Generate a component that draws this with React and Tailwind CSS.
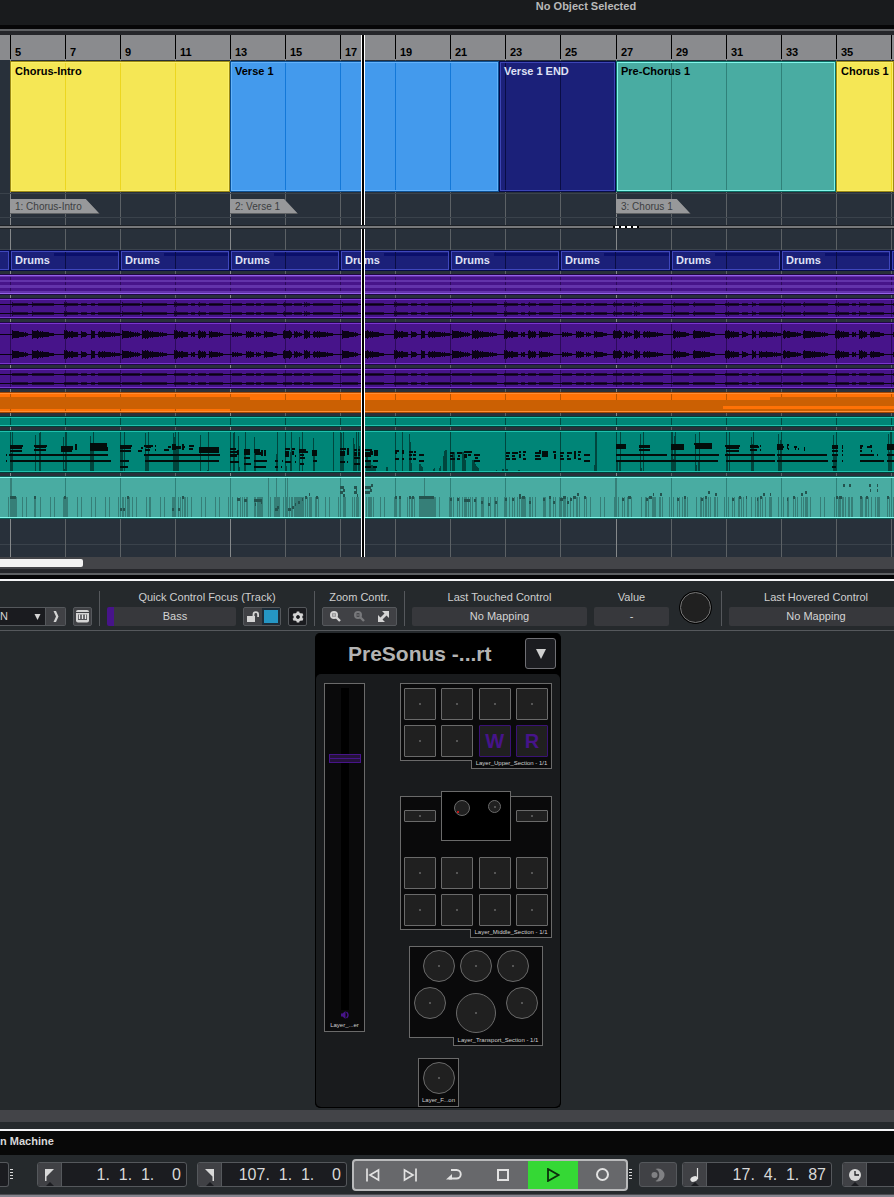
import React, { useState } from "react";

// bar numbers shown in the ruler, one cell for every two bars
const bars = [5, 7, 9, 11, 13, 15, 17, 19, 21, 23, 25, 27, 29, 31, 33, 35, 37];

const sections = [
  { name: "Chorus-Intro", width: "w-[220px]", offset: 0, box: "bg-[#f5e755] border-[#9c8a12] text-black", inner: "border-[#fbef6a]", line: "border-[#ecd61f]" },
  { name: "Verse 1", width: "w-[269px]", offset: 0, box: "bg-[#439aed] border-[#0b4f93] text-black", inner: "border-[#63b2fb]", line: "border-[#1378d8]" },
  { name: "Verse 1 END", width: "w-[117px]", offset: 6, box: "bg-[#1b2079] border-[#060b4a] text-[#dfe1f5]", inner: "border-[#3d45b5]", line: "border-[#0a0d45]" },
  { name: "Pre-Chorus 1", width: "w-[220px]", offset: 0, box: "bg-[#49aca2] border-[#0b6f65] text-black", inner: "border-[#83f6ea]", line: "border-[#2f8179]" },
  { name: "Chorus 1", width: "flex-1", offset: 0, box: "bg-[#f5e755] border-[#9c8a12] text-black", inner: "border-[#fbef6a]", line: "border-[#ecd61f]" },
];

// [x, y, w, h]
const bassNotes = [
  [10, 15, 13, 2], [10, 17, 12, 2], [10, 20, 12, 2], [34, 15, 13, 2], [35, 17, 11, 1], [34, 19, 12, 2],
  [61, 16, 12, 4], [61, 20, 11, 2], [75, 14, 2, 6], [90, 13, 17, 4], [90, 17, 18, 4],
  [6, 24, 1, 2], [9, 24, 99, 2], [6, 30, 1, 2], [10, 30, 101, 2],
  [120, 15, 12, 2], [120, 17, 11, 2], [120, 20, 11, 2], [138, 20, 4, 2], [141, 17, 2, 2], [120, 30, 9, 2], [120, 36, 8, 2],
  [144, 15, 9, 2], [146, 17, 5, 1], [145, 19, 5, 2], [155, 15, 1, 2], [155, 19, 1, 2], [144, 24, 76, 2], [145, 30, 74, 2],
  [164, 19, 5, 2], [168, 16, 3, 2], [172, 14, 4, 6], [176, 16, 5, 3], [182, 14, 2, 6], [184, 16, 1, 2], [189, 15, 5, 2], [189, 18, 4, 2],
  [199, 17, 20, 6], [230, 18, 6, 2], [230, 21, 7, 2], [230, 24, 7, 3], [230, 31, 9, 2], [237, 20, 2, 5],
  [244, 19, 6, 2], [244, 21, 6, 4], [244, 27, 6, 2], [244, 33, 7, 2], [254, 19, 6, 4], [255, 22, 6, 3],
  [261, 20, 2, 6], [264, 20, 2, 6], [254, 30, 13, 2], [254, 36, 12, 2], [275, 30, 3, 2], [282, 30, 1, 2], [275, 36, 3, 2], [281, 36, 1, 2],
  [285, 18, 5, 2], [285, 21, 4, 6], [292, 18, 3, 2], [292, 21, 2, 4], [285, 31, 6, 2], [295, 31, 1, 2], [295, 25, 1, 2],
  [299, 19, 7, 4], [305, 21, 3, 2], [300, 24, 4, 2], [300, 27, 5, 2], [300, 33, 4, 2], [312, 20, 5, 6], [313, 30, 4, 2],
  [340, 18, 6, 2], [340, 21, 5, 5], [347, 18, 2, 2], [347, 20, 2, 5], [340, 31, 5, 2], [347, 31, 1, 2],
  [354, 19, 3, 2], [358, 19, 2, 2], [354, 22, 3, 4], [358, 22, 2, 4], [354, 27, 6, 2], [354, 33, 6, 2],
  [365, 19, 7, 2], [365, 22, 6, 5], [370, 21, 3, 4], [374, 20, 4, 6], [365, 30, 6, 2], [373, 30, 5, 2], [365, 36, 6, 2], [373, 36, 4, 2],
  [395, 20, 4, 2], [395, 22, 2, 2], [402, 20, 2, 4], [395, 28, 4, 2], [402, 28, 2, 2],
  [409, 21, 4, 2], [414, 21, 2, 2], [409, 24, 3, 2], [413, 24, 3, 2], [409, 28, 3, 2], [413, 28, 3, 2], [419, 24, 5, 2], [419, 30, 5, 2],
  [450, 22, 4, 2], [450, 25, 3, 2], [450, 28, 5, 2], [457, 22, 5, 2], [458, 25, 2, 2], [457, 28, 3, 2],
  [464, 21, 4, 2], [468, 21, 4, 2], [464, 24, 3, 4], [468, 24, 3, 2], [474, 24, 6, 2], [475, 27, 3, 2], [474, 30, 6, 2],
  [506, 22, 4, 2], [506, 25, 3, 2], [506, 28, 4, 2], [512, 22, 6, 2], [512, 25, 3, 2], [512, 28, 4, 2],
  [519, 21, 2, 2], [519, 24, 2, 4], [523, 21, 3, 2], [523, 24, 2, 2], [523, 28, 3, 2],
  [535, 22, 6, 2], [539, 20, 2, 2], [535, 25, 5, 2], [535, 28, 6, 2], [542, 21, 6, 6], [553, 21, 3, 2], [554, 24, 2, 5],
  [560, 22, 4, 2], [560, 25, 3, 2], [560, 28, 4, 2], [567, 22, 5, 2], [567, 25, 2, 2], [567, 28, 4, 2],
  [574, 21, 2, 8], [578, 21, 3, 2], [578, 24, 2, 2], [578, 28, 3, 2], [584, 24, 6, 2], [584, 30, 6, 2],
  [616, 14, 10, 5], [639, 15, 11, 3], [639, 19, 11, 2], [616, 24, 51, 2], [616, 30, 102, 2], [671, 14, 13, 6],
  [694, 13, 18, 2], [695, 15, 17, 4], [671, 24, 48, 2], [725, 15, 15, 2], [726, 17, 13, 2], [726, 20, 13, 2], [725, 24, 50, 2], [726, 30, 49, 2],
  [750, 15, 8, 3], [757, 16, 2, 2], [750, 19, 7, 2], [760, 15, 1, 2], [760, 19, 1, 2], [777, 14, 6, 6], [783, 16, 1, 2],
  [787, 14, 2, 2], [787, 16, 1, 3], [788, 18, 1, 2], [794, 16, 3, 2], [795, 18, 1, 2], [798, 18, 1, 2], [804, 17, 1, 4],
  [777, 24, 50, 2], [777, 30, 51, 2], [832, 15, 6, 4], [832, 20, 6, 2], [842, 15, 1, 4], [842, 20, 1, 2], [832, 24, 6, 2], [842, 24, 1, 2],
  [832, 30, 5, 2], [842, 30, 1, 2], [832, 36, 4, 2], [860, 15, 3, 2], [860, 17, 2, 2], [860, 20, 2, 2], [867, 16, 5, 2], [870, 15, 2, 2],
  [871, 20, 1, 2], [860, 24, 14, 2], [877, 24, 1, 2], [860, 30, 24, 2], [887, 14, 7, 6], [887, 24, 7, 2], [887, 30, 7, 2],
];

// [x, top, w], always drawn down to the bottom of the clip
const bassStems = [
  [10, 2, 1], [12, 2, 1], [10, 23, 3], [35, 5, 1], [39, 3, 2], [40, 2, 1], [63, 7, 1], [65, 2, 2], [64, 39, 1], [90, 6, 1], [90, 18, 3], [93, 2, 1], [93, 34, 1],
  [120, 2, 1], [120, 19, 3], [124, 2, 1], [145, 3, 1], [148, 2, 1], [145, 24, 4], [173, 3, 1], [174, 7, 1], [173, 16, 6], [178, 2, 1], [200, 5, 1], [208, 2, 1],
  [207, 40, 2], [230, 2, 1], [233, 3, 2], [234, 2, 1], [233, 27, 2], [238, 6, 1], [239, 37, 1], [245, 2, 1], [244, 22, 2], [254, 7, 1], [254, 22, 2],
  [277, 2, 1], [276, 24, 2], [285, 2, 1], [286, 36, 1], [291, 2, 1], [290, 22, 2], [299, 7, 1], [302, 2, 1], [313, 8, 1], [314, 25, 1], [333, 2, 1],
  [340, 2, 1], [341, 3, 1], [343, 2, 1], [342, 24, 2], [353, 8, 1], [354, 14, 1], [354, 26, 2], [356, 2, 1], [358, 2, 1], [359, 16, 1],
  [366, 27, 2], [368, 30, 1], [369, 32, 2], [371, 35, 2], [373, 36, 3], [386, 37, 2], [395, 2, 1], [396, 40, 1], [402, 2, 1], [409, 4, 1], [410, 12, 1], [411, 33, 1],
  [419, 34, 2], [421, 36, 1], [422, 37, 1], [433, 39, 1], [434, 38, 1], [439, 38, 1], [440, 36, 1], [443, 26, 1], [444, 21, 1], [445, 20, 2], [450, 2, 1], [452, 22, 3],
  [462, 22, 2], [464, 25, 1], [465, 30, 1], [472, 30, 2], [474, 32, 1], [475, 34, 1], [476, 36, 1], [477, 37, 1], [478, 38, 1], [505, 2, 1], [496, 40, 1], [502, 39, 2],
  [506, 39, 2], [518, 40, 2], [560, 2, 1], [594, 35, 1], [595, 2, 2], [616, 2, 1], [620, 2, 1], [616, 31, 2], [619, 31, 2], [640, 4, 1], [643, 2, 1], [641, 38, 1],
  [671, 2, 2], [674, 6, 1], [675, 2, 1], [673, 29, 3], [695, 4, 1], [699, 2, 1], [696, 35, 1], [698, 30, 2], [726, 2, 1], [729, 2, 1], [726, 23, 2],
  [751, 7, 1], [752, 14, 1], [753, 2, 1], [751, 31, 3], [778, 4, 1], [781, 2, 1], [780, 10, 1], [779, 27, 3], [833, 5, 1], [836, 2, 1], [834, 25, 2],
  [888, 4, 1], [890, 2, 2], [889, 22, 2],
];

const keysNotes = [
  [10, 20, 6], [34, 20, 2], [64, 20, 2], [120, 32, 2], [123, 32, 2], [127, 20, 2], [172, 32, 2], [178, 32, 2], [182, 20, 2], [237, 22, 3], [244, 23, 3],
  [254, 23, 8], [255, 27, 1], [261, 25, 1], [275, 32, 3], [277, 30, 2], [288, 32, 3], [292, 30, 2], [295, 27, 1], [298, 25, 2],
  [302, 22, 1], [305, 20, 2], [309, 17, 1], [316, 20, 2], [340, 10, 4], [343, 13, 2], [340, 15, 3], [343, 18, 2], [354, 10, 3], [356, 13, 1], [354, 15, 3], [357, 18, 1],
  [365, 10, 6], [365, 15, 5], [371, 8, 2], [370, 13, 2], [395, 20, 2], [399, 20, 2], [409, 20, 2], [412, 20, 2], [419, 20, 15], [450, 22, 2], [457, 22, 2],
  [464, 23, 6], [474, 23, 2], [481, 25, 2], [488, 27, 2], [495, 25, 2], [505, 22, 2], [512, 22, 2], [519, 18, 2], [519, 20, 2], [522, 20, 3], [529, 25, 2],
  [543, 22, 2], [549, 20, 2], [553, 25, 2], [560, 22, 3], [563, 20, 3], [567, 25, 2], [570, 22, 2], [573, 20, 3], [577, 17, 2], [584, 20, 2],
  [622, 22, 2], [628, 20, 3], [646, 22, 2], [649, 20, 3], [653, 17, 1], [660, 17, 2], [677, 22, 2], [684, 20, 2], [701, 22, 2], [705, 20, 2], [708, 15, 2], [715, 17, 2],
  [732, 22, 2], [739, 20, 2], [746, 20, 1], [757, 22, 1], [760, 20, 2], [763, 17, 2], [770, 17, 1], [787, 22, 1], [793, 20, 2], [801, 17, 2], [805, 15, 2],
  [836, 20, 2], [839, 20, 3], [843, 8, 2], [849, 8, 2], [860, 20, 2], [866, 20, 2], [869, 8, 2], [870, 13, 1], [877, 8, 1], [877, 13, 1], [887, 20, 2],
];

// [x, w] short stems
const keysStems = [
  [8, 1], [10, 7], [22, 1], [26, 1], [34, 2], [40, 1], [50, 1], [54, 1], [63, 5], [77, 1], [81, 1], [91, 1], [95, 1], [105, 1], [109, 1], [118, 1], [122, 2], [125, 1],
  [127, 3], [132, 1], [136, 1], [146, 1], [149, 2], [160, 1], [164, 1], [172, 4], [178, 1], [180, 1], [182, 1], [184, 2], [187, 1], [191, 1], [201, 1], [205, 1], [215, 1], [219, 1],
  [228, 1], [232, 1], [237, 1], [240, 1], [242, 1], [244, 1], [246, 2], [254, 2], [257, 6], [270, 1], [274, 6], [283, 1], [286, 2], [289, 1], [291, 2], [294, 6],
  [300, 4], [305, 1], [307, 1], [309, 3], [315, 2], [318, 1], [325, 1], [329, 1], [338, 1], [343, 3], [352, 1], [354, 1], [356, 3], [366, 1], [368, 4], [373, 1], [380, 1], [384, 1],
  [394, 3], [399, 2], [407, 1], [409, 1], [411, 2], [414, 1], [419, 2], [421, 15], [439, 1], [449, 3], [453, 1], [457, 1], [459, 1], [462, 1], [464, 3], [468, 1], [470, 1], [472, 1],
  [475, 2], [481, 3], [488, 1], [490, 1], [494, 2], [497, 1], [504, 3], [509, 1], [512, 1], [514, 1], [517, 1], [519, 1], [521, 5], [529, 2], [532, 1], [535, 1],
  [543, 3], [549, 2], [553, 1], [555, 1], [559, 3], [563, 3], [567, 1], [570, 1], [573, 1], [576, 2], [579, 1], [584, 1], [586, 1], [590, 1],
  [600, 1], [604, 1], [614, 3], [618, 1], [622, 1], [624, 1], [627, 2], [631, 1], [641, 1], [645, 2], [648, 1], [652, 4], [659, 2], [662, 1], [669, 1], [673, 1], [677, 1], [679, 1],
  [682, 1], [684, 2], [687, 1], [696, 1], [700, 2], [703, 1], [705, 2], [708, 1], [710, 1], [714, 2], [717, 1], [724, 1], [728, 1], [732, 1], [734, 1], [738, 2], [741, 1], [743, 1],
  [746, 1], [751, 1], [755, 1], [757, 2], [760, 1], [762, 1], [765, 1], [769, 3], [778, 1], [783, 1], [787, 2], [793, 1], [795, 1], [797, 1], [801, 1], [803, 1], [805, 3], [810, 1],
  [820, 1], [824, 1], [834, 1], [838, 3], [842, 2], [845, 1], [848, 2], [851, 2], [860, 3], [865, 2], [868, 1], [871, 1], [875, 1], [877, 3], [887, 1], [889, 1], [893, 1],
];
const keysTall = [[10, 2], [268, 1], [276, 1], [287, 1], [424, 1], [615, 2]];

// [x, w, start level, end level]
const hits = [
  [12, 16, 4, 1], [32, 22, 4, 1], [64, 14, 4, 2], [81, 6, 3, 1], [91, 4, 4, 3], [98, 22, 3, 1],
  [122, 18, 4, 1], [142, 25, 4, 1], [174, 14, 4, 2], [191, 4, 2, 2], [198, 8, 4, 2], [209, 14, 3, 1],
  [232, 10, 2, 1], [246, 8, 3, 2], [256, 5, 2, 1], [264, 13, 3, 1], [283, 9, 4, 3], [294, 8, 3, 1], [304, 6, 4, 3], [313, 20, 3, 1],
];
const levels = [0, 1, 2].flatMap((n) =>
  hits.map(([x, w, a, b]) => [x + n * 330 + (n > 1 ? 1 : 0), w, a, b])
);

const toPath = (rects) =>
  rects.map(([x, y, w, h]) => `M${x} ${y}h${w}v${h}h${-w}z`).join("");

function wavePath(centers, scale) {
  const rects = [];
  levels.forEach(([x, w, a, b]) => {
    for (let i = 0; i < w; i++) {
      const noise = 0.7 + ((x * 7 + i * 3) % 5) * 0.09;
      const amp = Math.round((a + ((b - a) * i) / w) * noise * scale);
      // thin tails stay one pixel above and below the axis
      const h = Math.max(1, amp);
      centers.forEach((c) => rects.push([x + i, c - h, 1, h * 2 + 1]));
    }
  });
  return toPath(rects);
}

function Grid({ line, strong }) {
  return (
    <div className="absolute inset-0 flex overflow-hidden pl-[10px] pointer-events-none">
      {bars.map((bar) => (
        <div
          key={bar}
          className={`shrink-0 border-l ${bar === 25 ? "w-[56px]" : "w-[55px]"} ${
            strong && [5, 13, 27].includes(bar) ? strong : line
          }`}
        />
      ))}
    </div>
  );
}

function Clip({ height, box, inner, line, children }) {
  return (
    <div className={`relative overflow-hidden border-y ${box}`}>
      <Grid line={line} />
      <div className={`relative border-y ${inner}`}>
        <svg
          className="block"
          width="894"
          height={height - 4}
          viewBox={`0 2 894 ${height - 4}`}
          shapeRendering="crispEdges"
          aria-hidden="true"
        >
          {children}
        </svg>
      </div>
    </div>
  );
}

function AudioClip({ height, centers, scale }) {
  return (
    <Clip height={height} box="bg-[#47148a] border-[#1f0745]" inner="border-[#7a35cf]" line="border-[#2c0a5a]">
      {centers.map((c) => (
        <rect key={c} x="0" y={c} width="894" height="1" fill="#07020f" />
      ))}
      <path d={wavePath(centers, scale)} fill="#0b0316" fillOpacity={scale < 1 ? 0.7 : 1} />
    </Clip>
  );
}

function Ruler() {
  return (
    <div className="flex h-[25px] overflow-hidden bg-[#8a8b8e] pl-[10px]">
      {bars.map((bar) => (
        <div
          key={bar}
          className={`h-6 shrink-0 border-l border-black pl-1 pt-[11px] text-[11px] leading-[12px] font-bold text-black ${
            bar === 25 ? "w-[56px]" : "w-[55px]"
          }`}
        >
          {bar < 37 && bar}
        </div>
      ))}
    </div>
  );
}

function Section({ name, width, offset, box, inner, line }) {
  return (
    <div className={`relative h-[131px] shrink-0 overflow-hidden border ${width} ${box}`}>
      <div
        className="absolute inset-0 flex"
        style={{ paddingLeft: offset ? offset - 1 : 54 }}
      >
        {[0, 1, 2, 3, 4].map((n) => (
          <div key={n} className={`w-[55px] shrink-0 border-l ${line}`} />
        ))}
      </div>
      <div className={`relative h-full border pl-[3px] pt-[2px] text-[11px] leading-[12px] font-bold ${inner}`}>
        {name}
      </div>
    </div>
  );
}

function Marker({ children }) {
  return (
    <div className="h-[15px] w-fit bg-[#5f6163] pb-px pr-px [clip-path:polygon(0_0,calc(100%_-_14px)_0,100%_100%,0_100%)]">
      <div className="h-[14px] bg-[#97989a] pt-px pl-[5px] pr-[17px] text-[10px] leading-[14px] text-[#3c3e41]">
        {children}
      </div>
    </div>
  );
}

function Arranger() {
  return (
    <section className="relative bg-[#28303a]" aria-label="Arrangement">
      <Ruler />
      <div className="relative">
        <Grid line="border-[#5c6165]" strong="border-[#85888a]" />
        <div className="relative flex pl-[10px] pt-px">
          {sections.map((s) => (
            <Section key={s.name} {...s} />
          ))}
        </div>
        <div className="relative mt-px flex h-[25px] border-y border-[#3a424b] pl-[10px] pt-[5px]">
          <div className="w-[220px]"><Marker>1: Chorus-Intro</Marker></div>
          <div className="w-[386px]"><Marker>2: Verse 1</Marker></div>
          <div><Marker>3: Chorus 1</Marker></div>
        </div>
        <div className="h-[7px]" />
      </div>
      <div className="relative z-10 flex h-1 border-y border-[#1d2126] bg-[#77787a]">
        <div className="ml-[613px] flex gap-[2px] bg-black px-[2px]">
          <span className="w-1 bg-white" />
          <span className="w-1 bg-white" />
          <span className="w-1 bg-white" />
          <span className="w-1 bg-white" />
        </div>
      </div>
      <Tracks />
      {/* Playhead */}
      <div className="absolute inset-y-0 left-[361px] w-1 border-x border-white bg-black" />
    </section>
  );
}

function Tracks() {
  return (
    <div className="relative">
      <div className="h-[21px] border-b border-[#3a424b]" />
      <Grid line="border-[#5c6165]" strong="border-[#85888a]" />
      <div className="relative flex flex-col gap-[3px]">
        {/* Drums */}
        <div className="flex overflow-hidden">
          <div className="h-[21px] w-[10px] shrink-0 border-y border-r border-[#060b4a]">
            <div className="h-full border-y border-r border-[#3f47bd] bg-[#1b2079]" />
          </div>
          {[0, 1, 2, 3, 4, 5, 6, 7].map((n) => (
            <div
              key={n}
              className={`h-[21px] shrink-0 border border-[#060b4a] ${n === 5 ? "w-[111px]" : "w-[110px]"}`}
            >
              <div className="relative h-full overflow-hidden border border-[#3f47bd] bg-[#1b2079] pl-[3px] text-[11px] leading-[17px] font-bold text-[#dfe1f5]">
                Drums
                <span className="absolute top-px right-0 left-[42px] h-[3px] bg-[#0a0f6b]" />
                <span className="absolute inset-y-0 left-[53px] w-px bg-[#0a0d45]" />
              </div>
            </div>
          ))}
          <div className="h-[21px] flex-1 border-y border-l border-[#060b4a]">
            <div className="h-full border-y border-l border-[#3f47bd] bg-[#1b2079]" />
          </div>
        </div>

        <Clip height={21} box="bg-[#47148a] border-[#1f0745]" inner="border-[#9560ea]" line="border-[#2c0a5a]">
          <path d={toPath([[0, 2, 894, 1], [0, 6, 894, 2], [0, 11, 894, 3], [0, 17, 894, 2]])} fill="#6636ad" fillOpacity="0.9" />
        </Clip>
        <AudioClip height={21} centers={[6, 15]} scale={0.4} />
        <AudioClip height={43} centers={[12, 32]} scale={1} />
        <AudioClip height={21} centers={[6, 15]} scale={0.3} />

        <Clip height={21} box="bg-[#ff7206] border-[#a34600]" inner="border-[#ff8e35]" line="border-[#b95500]">
          <path d={toPath([[0, 5, 250, 12], [230, 8, 664, 11]])} fill="#cb6003" />
          <path d={toPath([[723, 14, 171, 3]])} fill="#ff7206" />
          <path d={toPath([[770, 5, 124, 3]])} fill="#cb6003" />
        </Clip>

        <Clip height={11} box="bg-[#008577] border-[#003f38]" inner="border-[#1fc0ad]" line="border-[#004a42]" />

        <Clip height={43} box="bg-[#008577] border-[#003f38]" inner="border-[#1fc0ad]" line="border-[#00463e]">
          <path d={toPath(bassStems.map(([x, y, w]) => [x, y, w, 41 - y]))} fill="#00463e" />
          <path d={toPath(bassNotes)} fill="#020d0b" />
        </Clip>

        <Clip height={43} box="bg-[#49aca2] border-[#0b5f57]" inner="border-[#83f6ea]" line="border-[#2f8179]">
          <path d={toPath(keysStems.map(([x, w]) => [x, 21, w, 20]))} fill="#367f78" />
          <path d={toPath(keysTall.map(([x, w]) => [x, 2, w, 39]))} fill="#367f78" />
          <path d={toPath(keysNotes.map(([x, y, w]) => [x, y, w, 3]))} fill="#24544f" />
        </Clip>
      </div>
      <div className="h-[26px] border-b border-[#3a424b]" />
      <div className="h-3" />
    </div>
  );
}

function Separator() {
  return <div className="h-[35px] w-px shrink-0 bg-[#55585c]" />;
}

const controlBox = "h-[19px] rounded-[2px] bg-[#37383c] text-center text-[11px] leading-[19px] text-[#d4d4d4]";

function Readout({ label, value, width }) {
  return (
    <div className={`shrink-0 text-center text-[11px] text-[#cfcfcf] ${width}`}>
      <div className="h-4 leading-[12px]">{label}</div>
      <div className={controlBox}>{value}</div>
    </div>
  );
}

function Toolbar() {
  const [mode, setMode] = useState("N");
  return (
    <div className="flex h-[50px] items-start gap-[7px] overflow-hidden border-b border-[#55585c] pt-[10px]">
      <div className="flex w-[92px] shrink-0 items-end gap-[7px] pt-4">
        <div className="flex h-[19px] w-[66px] rounded-r-[2px] border border-l-0 border-[#55585c] bg-[#1a1b1f]">
          <div className="relative flex-1">
            <select
              aria-label="Mode"
              value={mode}
              onChange={(e) => setMode(e.target.value)}
              className="block h-[17px] w-full appearance-none bg-transparent p-0 text-[11px] leading-[17px] text-[#d4d4d4]"
            >
              <option>N</option>
            </select>
            <svg className="pointer-events-none absolute top-[6px] right-[4px]" width="7" height="6" aria-hidden="true">
              <path d="M0.500 0h6L3.500 6z" fill="#d4d4d4" />
            </svg>
          </div>
          <button aria-label="Next" className="flex w-5 items-center justify-center border-l border-[#55585c] bg-[#404145]">
            <svg width="6" height="11" viewBox="0 0 6 11">
              <path d="M.5 0H3l2.500 5.500L3 11H.5L3 5.500z" fill="#d4d4d4" />
            </svg>
          </button>
        </div>
        <button aria-label="Keyboard" className="flex h-[19px] w-[19px] items-center justify-center rounded-[2px] border border-[#55585c] bg-[#404145]">
          <svg width="13" height="13" viewBox="0 0 13 13" aria-hidden="true">
            <path d="M2 0h9a2 2 0 0 1 2 2H0a2 2 0 0 1 2-2z" fill="#d4d4d4" />
            <path d="M0 3h13v7.500a2 2 0 0 1-2 2H2a2 2 0 0 1-2-2z" fill="#d4d4d4" />
            <path d="M2 4.500h9V10H2z" fill="#55565a" />
            <path d="M3.500 4.500V9M6.500 4.500V9M9.500 4.500V9" stroke="#e6e6e6" strokeWidth="1.300" />
          </svg>
        </button>
      </div>
      <Separator />
      <div className="w-[200px] shrink-0">
        <div className="h-4 text-center text-[11px] leading-[12px] text-[#cfcfcf]">Quick Control Focus (Track)</div>
        <div className="flex gap-[7px]">
          <div className={`w-[129px] border-l-[7px] border-[#47148a] ${controlBox}`}>Bass</div>
          <div className="flex h-[19px] w-[38px] rounded-[2px] border border-[#55585c] bg-[#404145]">
            <button aria-label="Lock" className="flex w-[18px] items-center justify-center">
              <svg width="14" height="12" viewBox="0 0 14 12" aria-hidden="true">
                <path d="M1 5h8v6H1z" fill="#d4d4d4" />
                <path d="M7.500 6V3.500a2.300 2.300 0 0 1 4.600 0V6" fill="none" stroke="#d4d4d4" strokeWidth="1.800" />
              </svg>
            </button>
            <button aria-label="Colour" className="flex-1 border-2 border-[#1e2c38] bg-[#2596c4]" />
          </div>
          <button aria-label="Settings" className="flex h-[19px] w-[19px] items-center justify-center rounded-[2px] border border-[#55585c] bg-[#1a1b1f]">
            <svg width="12" height="12" viewBox="-6 -6 12 12" aria-hidden="true">
              <circle r="3.200" fill="none" stroke="#d4d4d4" strokeWidth="2.600" />
              <path d="M0-5.600v2M0 5.600v-2M-4.800-2.800l1.700 1M4.800 2.800l-1.700-1M-4.800 2.800l1.700-1M4.800-2.800l-1.700 1" stroke="#d4d4d4" strokeWidth="2.600" />
            </svg>
          </button>
        </div>
      </div>
      <Separator />
      <div className="w-[75px] shrink-0">
        <div className="h-4 text-center text-[11px] leading-[12px] text-[#cfcfcf]">Zoom Contr.</div>
        <div className="flex h-[19px] items-center justify-around rounded-[2px] border border-[#55585c] bg-[#404145]">
          <button aria-label="Zoom in">
            <svg className="block" width="11" height="11" viewBox="0 0 11 11" fill="none" stroke="#d4d4d4">
              <circle cx="4" cy="4" r="3" strokeWidth="2" />
              <path d="M6.500 6.500l3.500 3.500" strokeWidth="2.400" />
              <path d="M2 4h4M4 2v4" strokeWidth="1.200" />
            </svg>
          </button>
          <button aria-label="Zoom out">
            <svg className="block" width="11" height="11" viewBox="0 0 11 11" fill="none" stroke="#77787b">
              <circle cx="4" cy="4" r="3" strokeWidth="2" />
              <path d="M6.500 6.500l3.500 3.500" strokeWidth="2.400" />
              <path d="M2 4h4" strokeWidth="1.200" />
            </svg>
          </button>
          <button aria-label="Zoom full">
            <svg className="block" width="11" height="11" viewBox="0 0 11 11" aria-hidden="true">
              <path d="M4 0h7v7L8.500 4.500l-4 4L7 11H0V4l2.500 2.500 4-4z" fill="#d4d4d4" />
            </svg>
          </button>
        </div>
      </div>
      <Separator />
      <Readout label="Last Touched Control" value="No Mapping" width="w-[175px]" />
      <Readout label="Value" value="-" width="w-[75px]" />
      <div className="mr-[2px] ml-[3px] h-[33px] w-[33px] shrink-0 rounded-full border border-black bg-black">
        <div className="h-full w-full rounded-full border border-[#777] bg-[#202020]" />
      </div>
      <Separator />
      <Readout label="Last Hovered Control" value="No Mapping" width="w-[174px]" />
    </div>
  );
}

const pad = "flex items-center justify-center border border-[#6a6a6a] bg-[#202020] p-0";
const Dot = () => <span className="h-[2px] w-[2px] bg-[#555]" />;

function Pad({ name, size = "h-8 w-8" }) {
  return (
    <button aria-label={name} className={`rounded-[1px] ${pad} ${size}`}>
      <Dot />
    </button>
  );
}

function Knob({ name, size = "h-8 w-8" }) {
  return (
    <button aria-label={name} className={`rounded-full ${pad} ${size}`}>
      <Dot />
    </button>
  );
}

function LetterPad({ children }) {
  return (
    <button className="h-8 w-8 rounded-[1px] border border-[#3a1275] bg-[#202020] text-[20px] leading-[30px] font-bold text-[#47148a]">
      {children}
    </button>
  );
}

// outlined box with a small name tab hanging from its lower right corner
function Layer({ name, width, tab, height, children }) {
  return (
    <div className={`relative flex flex-col items-end ${width}`}>
      <div className={`w-full border border-[#6a6a6a] bg-[#0a0a0b] ${height}`}>{children}</div>
      <div className={`relative -mt-px h-[9px] border border-t-0 border-[#6a6a6a] bg-[#0a0a0b] text-center text-[6px] leading-[6px] whitespace-nowrap text-[#d0d0d0] ${tab}`}>
        {name}
      </div>
    </div>
  );
}

function Device() {
  const [level, setLevel] = useState(79);
  return (
    <section className="w-[246px] rounded-[5px] border-x border-b border-black bg-black" aria-label="PreSonus">
      <div className="flex h-[41px] items-center justify-between pr-1 pl-8">
        <h2 className="text-[21px] leading-6 font-bold text-[#b3b3b3]">PreSonus -...rt</h2>
        <button aria-label="Choose device" className="flex h-[31px] w-[31px] items-center justify-center rounded-[3px] border border-[#6f6f74] bg-[#1b1c20]">
          <svg width="10" height="10" viewBox="0 0 10 10" aria-hidden="true">
            <path d="M0 0h10L5 10z" fill="#cfcfcf" />
          </svg>
        </button>
      </div>
      <div className="flex h-[433px] gap-[35px] rounded-[5px] bg-[#191b1d] pt-[9px] pl-2">
        {/* Fader */}
        <div className="flex h-[349px] w-[41px] shrink-0 flex-col items-center border border-[#6a6a6a] bg-[#0a0a0b] pt-1">
          <input
            type="range"
            aria-label="Fader"
            value={level}
            onChange={(e) => setLevel(Number(e.target.value))}
            className="h-[322px] w-8 shrink-0 appearance-none bg-[linear-gradient(to_right,transparent_12px,#000_12px,#000_20px,transparent_20px)] [direction:rtl] [writing-mode:vertical-lr] [&::-webkit-slider-thumb]:h-[9px] [&::-webkit-slider-thumb]:w-8 [&::-webkit-slider-thumb]:appearance-none [&::-webkit-slider-thumb]:border [&::-webkit-slider-thumb]:border-[#47148a] [&::-webkit-slider-thumb]:bg-[linear-gradient(to_bottom,#241339_3px,#47148a_3px,#47148a_4px,#241339_4px)]"
          />
          <svg className="mt-px shrink-0" width="8" height="8" viewBox="0 0 8 8" aria-hidden="true">
            <path d="M0 2.500h1.500L4.500 0v8L1.500 5.500H0z" fill="#47148a" />
            <path d="M5.500 1q3 3 0 6" fill="none" stroke="#47148a" strokeWidth="1.400" />
          </svg>
          <span className="mt-[3px] text-[6px] leading-[6px] text-[#d0d0d0]">Layer_...er</span>
        </div>

        <div className="flex w-[152px] flex-col">
          <Layer name="Layer_Upper_Section - 1/1" width="w-[152px]" tab="w-[81px]" height="h-[78px]">
            <div className="flex flex-wrap justify-between gap-y-[5px] px-[3px] pt-1">
              <Pad name="Pad 1" />
              <Pad name="Pad 2" />
              <Pad name="Pad 3" />
              <Pad name="Pad 4" />
              <Pad name="Pad 5" />
              <Pad name="Pad 6" />
              <LetterPad>W</LetterPad>
              <LetterPad>R</LetterPad>
            </div>
          </Layer>

          <div className="relative mt-[27px]">
            <Layer name="Layer_Middle_Section - 1/1" width="w-[152px]" tab="w-[82px]" height="h-[134px]">
              <div className="flex justify-between px-[3px] pt-[13px]">
                <Pad name="Left" size="h-3 w-8" />
                <Pad name="Right" size="h-3 w-8" />
              </div>
              <div className="mt-[35px] flex flex-wrap justify-between gap-y-[5px] px-[3px]">
                {[1, 2, 3, 4, 5, 6, 7, 8].map((n) => (
                  <Pad key={n} name={`Button ${n}`} />
                ))}
              </div>
            </Layer>
            <div className="absolute -top-[5px] left-[41px] flex h-[50px] w-[70px] justify-between border border-[#6a6a6a] bg-black pt-2 pr-[9px] pl-3">
              <button aria-label="Dial" className="relative h-4 w-4 rounded-full border border-[#6a6a6a] bg-[#202020]">
                <span className="absolute bottom-[2px] left-[2px] h-[2px] w-[2px] bg-[#c01818]" />
              </button>
              <Knob name="Push" size="h-[13px] w-[13px]" />
            </div>
          </div>

          <div className="mt-2 ml-[9px]">
            <Layer name="Layer_Transport_Section - 1/1" width="w-[134px]" tab="w-[90px]" height="h-[92px]">
              <div className="flex justify-center gap-[5px] pt-[3px]">
                <Knob name="Rewind" />
                <Knob name="Forward" />
                <Knob name="Cycle" />
              </div>
              <div className="mt-[5px] flex items-start justify-between px-1">
                <Knob name="Stop" />
                <div className="pt-[6px]">
                  <Knob name="Play" size="h-10 w-10" />
                </div>
                <Knob name="Record" />
              </div>
            </Layer>
          </div>

          <div className="mt-3 ml-[18px] flex h-[49px] w-[41px] flex-col items-center border border-[#6a6a6a] bg-[#0a0a0b] pt-[3px]">
            <Knob name="Foot switch" />
            <span className="mt-[3px] text-[6px] leading-[6px] text-[#d0d0d0]">Layer_F...on</span>
          </div>
        </div>
      </div>
    </section>
  );
}

function TimeField({ label, value, icon }) {
  return (
    <label className="flex h-[25px] w-[150px] shrink-0 overflow-hidden rounded-[3px] border border-[#55585c] bg-[#1b1c20]">
      <span className="relative flex w-6 shrink-0 items-center justify-center border-r border-[#55585c] bg-[#404145]">
        {icon}
        <svg className="absolute bottom-0 left-[8px]" width="8" height="4" aria-hidden="true">
          <path d="M0 4l4-4 4 4z" fill="#1b1c20" />
        </svg>
      </span>
      <input
        aria-label={label}
        defaultValue={value}
        className="w-full min-w-0 bg-transparent pr-[5px] text-right text-[16px] text-[#d8d8d8]"
      />
    </label>
  );
}

const Grip = () => (
  <svg className="shrink-0" width="3" height="11" fill="#d8d8d8" shapeRendering="crispEdges" aria-hidden="true">
    <path d="M0 0h3v1H0zM0 3h3v1H0zM0 6h3v1H0zM0 9h3v1H0z" />
  </svg>
);

const key = "flex items-center justify-center";

function Transport() {
  const [playing, setPlaying] = useState(true);
  return (
    <footer className="flex h-[39px] items-center overflow-hidden">
      <div className="h-[25px] w-[9px] shrink-0 rounded-r-[3px] border border-l-0 border-[#55585c] bg-[#1b1c20]" />
      <div className="ml-px flex w-[27px] shrink-0"><Grip /></div>
      <TimeField
        label="Left locator"
        value="1.  1.  1.    0"
        icon={<svg width="9" height="12" aria-hidden="true"><path d="M0 0h9L1.500 7.500V12H0z" fill="#d8d8d8" /></svg>}
      />
      <div className="w-[10px] shrink-0" />
      <TimeField
        label="Right locator"
        value="107.  1.  1.    0"
        icon={<svg width="9" height="12" aria-hidden="true"><path d="M9 0H0l7.500 7.500V12H9z" fill="#d8d8d8" /></svg>}
      />
      <div className="ml-[5px] flex h-8 w-[276px] shrink-0 overflow-hidden rounded-[4px] border-2 border-[#b9babb] bg-[#67686b]">
        <button aria-label="Previous marker" className={`w-[37px] ${key}`}>
          <svg width="14" height="14" viewBox="0 0 14 14" fill="none" stroke="#e2e2e2" strokeWidth="1.700">
            <path d="M1 .5v13M12.500 2v10L4 7z" />
          </svg>
        </button>
        <button aria-label="Next marker" className={`w-[38px] ${key}`}>
          <svg width="14" height="14" viewBox="0 0 14 14" fill="none" stroke="#e2e2e2" strokeWidth="1.700">
            <path d="M13 .5v13M1.500 2v10L10 7z" />
          </svg>
        </button>
        <button aria-label="Cycle" className={`w-[49px] ${key}`}>
          <svg width="16" height="12" viewBox="0 0 16 12" fill="none" stroke="#e2e2e2" strokeWidth="1.900">
            <path d="M5 1h5.500a4.250 4.250 0 0 1 0 8.500H3" />
            <path d="M0 10.500L6 5v5.500z" fill="#e2e2e2" stroke="none" />
          </svg>
        </button>
        <button aria-label="Stop" className={`w-[50px] ${key}`}>
          <span className="h-3 w-3 border-2 border-[#e2e2e2]" />
        </button>
        <button
          aria-label="Play"
          onClick={() => setPlaying(!playing)}
          className={`w-[50px] ${key} ${playing ? "bg-[#35d835]" : ""}`}
        >
          <svg width="14" height="14" viewBox="0 0 14 14" fill="none" stroke="#0c2f0c" strokeWidth="1.800">
            <path d="M2 1v12l10.500-6z" />
          </svg>
        </button>
        <button aria-label="Record" className={`flex-1 ${key}`}>
          <span className="h-[13px] w-[13px] rounded-full border-2 border-[#e2e2e2]" />
        </button>
      </div>
      <div className="ml-px flex w-[10px] shrink-0"><Grip /></div>
      <button aria-label="Punch" className={`h-[25px] w-[38px] shrink-0 rounded-[3px] border border-[#55585c] bg-[#404145] ${key}`}>
        <svg width="14" height="14" viewBox="0 0 14 14" aria-hidden="true">
          <circle cx="3.500" cy="7" r="3" fill="#808184" />
          <path d="M7 .5a6.500 6.500 0 0 1 0 13c-1 0-2-.2-2.500-.6A6.500 6.500 0 0 0 4.500 1.100C5 .7 6 .5 7 .5z" fill="#808184" />
        </svg>
      </button>
      <div className="w-[5px] shrink-0" />
      <TimeField
        label="Position"
        value="17.  4.  1.  87"
        icon={
          <svg width="9" height="14" viewBox="0 0 9 14" aria-hidden="true">
            <ellipse cx="4" cy="11" rx="3.800" ry="2.600" fill="#e2e2e2" transform="rotate(-20 4 11)" />
            <path d="M7.500 0v11" stroke="#e2e2e2" strokeWidth="1.200" />
          </svg>
        }
      />
      <div className="w-[10px] shrink-0" />
      <TimeField
        label="Time"
        value=""
        icon={
          <svg width="12" height="12" viewBox="0 0 12 12" aria-hidden="true">
            <circle cx="6" cy="6" r="6" fill="#d8d8d8" />
            <path d="M6 2v4h4" fill="none" stroke="#1b1c20" strokeWidth="1.300" />
          </svg>
        }
      />
    </footer>
  );
}

export default function App() {
  return (
    <main className="flex min-h-screen flex-col overflow-hidden bg-[#25292c] font-['Liberation_Sans',Arial,sans-serif]">
      {/* Info line */}
      <header className="h-[25px] bg-[#191b1d] pl-[278px] text-center text-[11px] leading-[12px] font-bold text-[#b9b9b9]">
        No Object Selected
      </header>
      <div className="h-1 bg-[#060607]" />
      <div className="h-[2px] bg-[#5e6063]" />
      <div className="h-1 bg-[#25262a]" />

      <Arranger />

      {/* Horizontal scroll */}
      <div className="h-3 bg-[#434448] py-[2px]">
        <div className="h-2 w-[83px] rounded-r-[2px] bg-[#f2f2f2]" />
      </div>
      <div className="h-1 bg-[#25262a]" />
      <div className="h-[2px] bg-[#5e6063]" />
      <div className="h-1 bg-[#060607]" />
      <div className="h-[2px] bg-[#f4f4f6]" />

      <Toolbar />

      <div className="flex flex-1 justify-center pt-[2px] pr-[18px] pb-[2px]">
        <Device />
      </div>

      <div className="h-3 bg-[#434448]" />
      <div className="h-[7px]" />
      <div className="h-[2px] bg-[#f4f4f6]" />
      <div className="h-6 bg-[#080808] text-[11px] leading-[21px] font-bold text-[#d8d8d8]">
        n Machine
      </div>
      <Transport />
      <div className="h-[3px] border-t border-[#4a4b50] bg-[#85848e]" />
    </main>
  );
}
